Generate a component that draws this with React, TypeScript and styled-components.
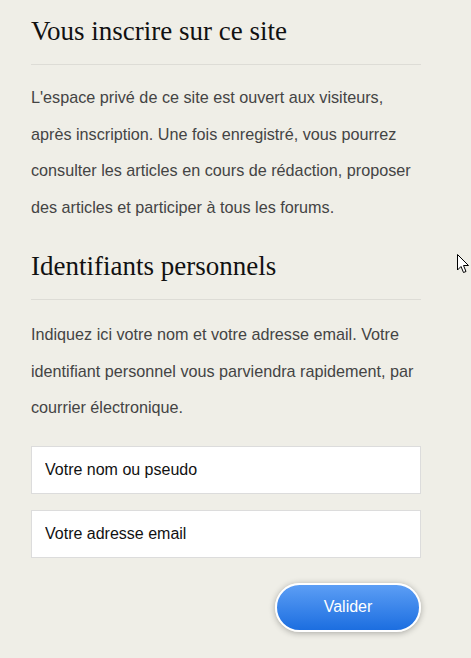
import React from "react";
import styled, { createGlobalStyle } from "styled-components";

const Global = createGlobalStyle`
  html, body { margin: 0; padding: 0; background: #efeee7; }
  body { font-family: "Liberation Sans", Arial, sans-serif; }
`;

const Page = styled.div`
  position: relative;
  width: 471px;
  height: 658px;
  background: #efeee7;
  overflow: hidden;
`;

const Content = styled.div`
  width: 390px;
  padding: 16px 0 0 31px;
  display: flex;
  flex-direction: column;
`;

const Section = styled.section<{ $gap?: number; $paraGap?: number }>`
  display: flex;
  flex-direction: column;
  margin-bottom: ${(p) => p.$gap ?? 0}px;
`;

const Heading = styled.h2`
  margin: 0;
  font-family: "Liberation Serif", "Times New Roman", serif;
  font-weight: normal;
  font-size: 27px;
  line-height: 31px;
  color: #111;
  padding-bottom: 17px;
  border-bottom: 1px solid #dddcd6;
`;

const Para = styled.p<{ $top: number }>`
  margin: ${(p) => p.$top}px 0 0;
  font-size: 16.2px;
  line-height: 36.7px;
  color: #444;
`;

const Form = styled.form`
  display: flex;
  flex-direction: column;
  gap: 16px;
  margin-top: 20px;
`;

const Input = styled.input`
  box-sizing: border-box;
  width: 390px;
  height: 48px;
  padding: 0 13px;
  border: 1px solid #dcdcdc;
  background: #fff;
  font-family: "Liberation Sans", Arial, sans-serif;
  font-size: 16px;
  color: #111;
  outline: none;
  &::placeholder { color: #111; opacity: 1; }
`;

const Actions = styled.div`
  display: flex;
  justify-content: flex-end;
  margin-top: 9px;
`;

const Button = styled.button`
  box-sizing: border-box;
  width: 146px;
  height: 49px;
  border: 2px solid #fff;
  border-radius: 25px;
  background: linear-gradient(to bottom, #5c9ef5, #1c6ee0);
  color: #fff;
  font-family: "Liberation Sans", Arial, sans-serif;
  font-size: 16px;
  box-shadow: 0 1px 6px rgba(0, 0, 0, 0.3);
  cursor: pointer;
`;

const Cursor = styled.svg`
  position: absolute;
  left: 457px;
  top: 254px;
`;

export default function App() {
  return (
    <Page>
      <Global />
      <Content>
        <Section $gap={25}>
          <Heading>Vous inscrire sur ce site</Heading>
          <Para $top={14}>
            L'espace privé de ce site est ouvert aux visiteurs, après inscription. Une fois enregistré, vous pourrez
            consulter les articles en cours de rédaction, proposer des articles et participer à tous les forums.
          </Para>
        </Section>
        <Section>
          <Heading>Identifiants personnels</Heading>
          <Para $top={16}>
            Indiquez ici votre nom et votre adresse email. Votre identifiant personnel vous parviendra rapidement, par
            courrier électronique.
          </Para>
        </Section>
        <Form onSubmit={(e) => e.preventDefault()}>
          <Input placeholder="Votre nom ou pseudo" />
          <Input placeholder="Votre adresse email" />
          <Actions>
            <Button type="submit">Valider</Button>
          </Actions>
        </Form>
      </Content>
      <Cursor width="13" height="20" viewBox="0 0 13 20">
        <path d="M0.5 0.5 L0.5 16 L4 12.5 L6.5 18.5 L9 17.5 L6.5 11.5 L11.5 11.5 Z" fill="#fff" stroke="#000" strokeWidth="1" />
      </Cursor>
    </Page>
  );
}
